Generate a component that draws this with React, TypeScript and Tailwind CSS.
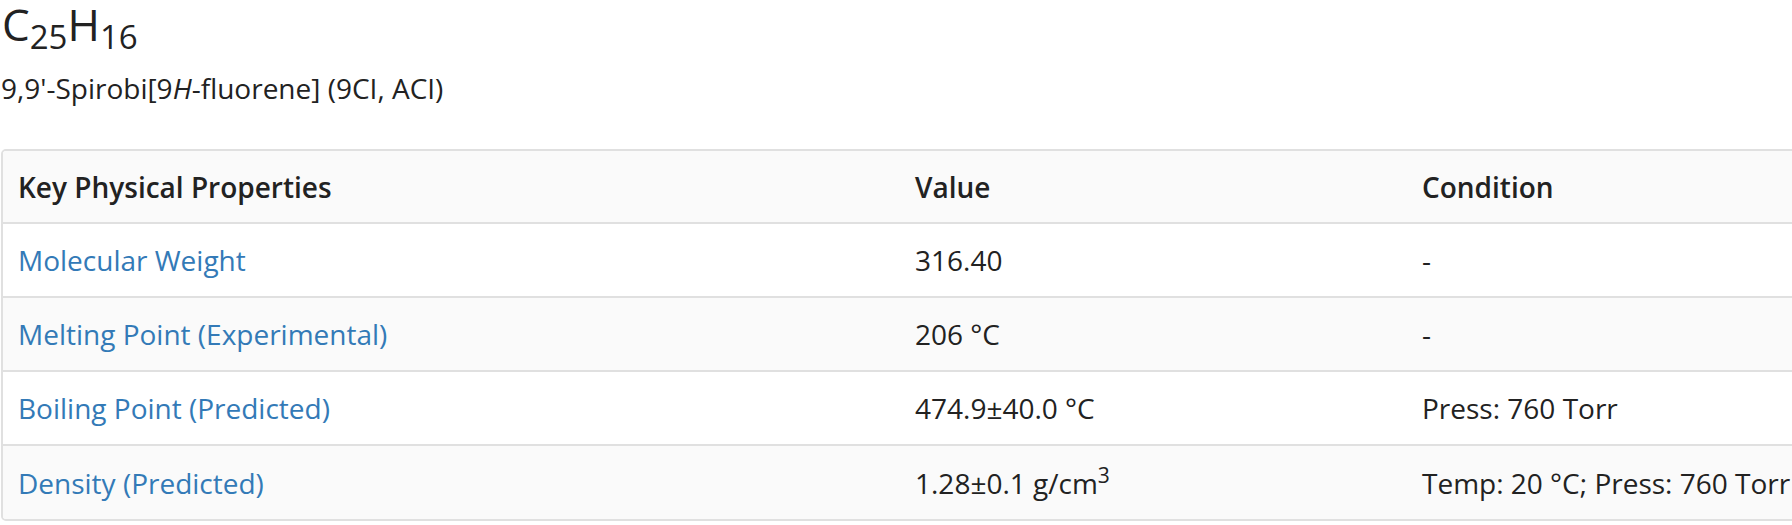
import React from "react";

type Row = {
  label: string;
  value: React.ReactNode;
  condition: string;
};

const rows: Row[] = [
  { label: "Molecular Weight", value: "316.40", condition: "-" },
  { label: "Melting Point (Experimental)", value: "206 °C", condition: "-" },
  { label: "Boiling Point (Predicted)", value: "474.9±40.0 °C", condition: "Press: 760 Torr" },
  {
    label: "Density (Predicted)",
    value: (
      <>
        1.28±0.1 g/cm<sup>3</sup>
      </>
    ),
    condition: "Temp: 20 °C; Press: 760 Torr",
  },
];

export default function App() {
  return (
    <div
      className="w-full h-[525px] overflow-hidden bg-white text-[#222]"
      style={{ fontFamily: '"Open Sans", "Noto Sans", sans-serif' }}
    >
      {/* Formula + name */}
      <h1 className="pl-[2px] text-[44px] leading-[48px] font-normal text-[#222]">
        C<sub>25</sub>H<sub>16</sub>
      </h1>
      <p className="mt-[20px] pl-[1px] text-[28px] leading-[40px] text-[#222]">
        9,9'-Spirobi[9<i>H</i>-fluorene] (9CI, ACI)
      </p>

      {/* Properties table */}
      <div className="mt-[41px] ml-px w-[1960px] border-2 border-[#e0e0e0] rounded-[5px] overflow-hidden">
        <table className="w-full table-fixed border-collapse text-[28px]">
          <colgroup>
            <col className="w-[897px]" />
            <col className="w-[507px]" />
            <col />
          </colgroup>
          <thead>
            <tr className="bg-[#fafafa] h-[72px]">
              <th className="px-[15px] text-left font-semibold text-[#222] align-middle">Key Physical Properties</th>
              <th className="px-[15px] text-left font-semibold text-[#222] align-middle">Value</th>
              <th className="px-[15px] text-left font-semibold text-[#222] align-middle">Condition</th>
            </tr>
          </thead>
          <tbody>
            {rows.map((row, i) => (
              <tr
                key={row.label}
                className={`h-[74px] border-t-2 border-[#e0e0e0] ${i % 2 === 1 ? "bg-[#fafafa]" : "bg-white"}`}
              >
                <td className="px-[15px] align-middle whitespace-nowrap">
                  <a href="#" className="text-[#337ab7]">
                    {row.label}
                  </a>
                </td>
                <td className="px-[15px] align-middle text-[#222] whitespace-nowrap">{row.value}</td>
                <td className="px-[15px] align-middle text-[#222] whitespace-nowrap">{row.condition}</td>
              </tr>
            ))}
          </tbody>
        </table>
      </div>
    </div>
  );
}
